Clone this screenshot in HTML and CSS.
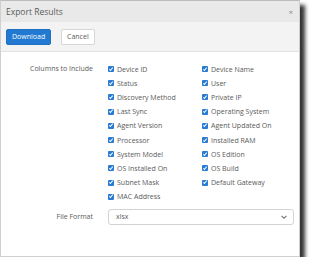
FILE: index.html
```html
<!DOCTYPE html>
<html lang="en">
<head>
    <meta charset="UTF-8" />
    <title>Export Results</title>
    <link rel="stylesheet" href="styles.css">
</head>
<body>

<div class="modal">
    <div class="modal-header">
        <span class="title">Export Results</span>
        <span class="close">&times;</span>
    </div>
    <div class="toolbar">
        <button class="btn btn-primary">Download</button>
        <button class="btn">Cancel</button>
    </div>
    <div class="modal-body">
        <div class="form-row">
            <label class="row-label">Columns to Include</label>
            <div class="columns">
                <div class="col">
                    <div class="check"><span class="box"></span>Device ID</div>
                    <div class="check"><span class="box"></span>Status</div>
                    <div class="check"><span class="box"></span>Discovery Method</div>
                    <div class="check"><span class="box"></span>Last Sync</div>
                    <div class="check"><span class="box"></span>Agent Version</div>
                    <div class="check"><span class="box"></span>Processor</div>
                    <div class="check"><span class="box"></span>System Model</div>
                    <div class="check"><span class="box"></span>OS Installed On</div>
                    <div class="check"><span class="box"></span>Subnet Mask</div>
                    <div class="check"><span class="box"></span>MAC Address</div>
                </div>
                <div class="col">
                    <div class="check"><span class="box"></span>Device Name</div>
                    <div class="check"><span class="box"></span>User</div>
                    <div class="check"><span class="box"></span>Private IP</div>
                    <div class="check"><span class="box"></span>Operating System</div>
                    <div class="check"><span class="box"></span>Agent Updated On</div>
                    <div class="check"><span class="box"></span>Installed RAM</div>
                    <div class="check"><span class="box"></span>OS Edition</div>
                    <div class="check"><span class="box"></span>OS Build</div>
                    <div class="check"><span class="box"></span>Default Gateway</div>
                </div>
            </div>
        </div>
        <div class="form-row format-row">
            <label class="row-label">File Format</label>
            <div class="select">
                <span>xlsx</span>
                <svg width="6" height="4" viewBox="0 0 6 4"><path d="M0.5 0.8 L3 3.2 L5.5 0.8" fill="none" stroke="#777" stroke-width="1.1"/></svg>
            </div>
        </div>
    </div>
</div>

</body>
</html>
```

FILE: styles.css
```css
body { margin: 0; background: #fff; font-family: "Open Sans", Arial, sans-serif; color: #5a5a5a; }
.modal { width: 298px; height: 255px; border: 1px solid #cfcfcf; border-top-color: #bdbdbd; background: #fff; box-shadow: 5px 5px 4px rgba(0,0,0,0.8); }
.modal-header { height: 21px; background: #e9e9e9; display: flex; align-items: center; justify-content: space-between; padding: 0 6px 0 5px; }
.title { font-size: 8.5px; color: #5a5a5a; }
.close { font-size: 8px; color: #888; }
.toolbar { height: 29px; background: #f3f3f3; border-bottom: 1px solid #e2e2e2; display: flex; align-items: center; gap: 10px; padding: 0 5px; }
.btn { height: 16px; padding: 0 5px; font-family: inherit; font-size: 7px; color: #5a5a5a; background: #fff; border: 1px solid #d6d6d6; border-radius: 2px; }
.btn-primary { width: 45px; background: #2279d2; border-color: #1f6fc2; color: #fff; }
.modal-body { padding-top: 10px; }
.form-row { display: flex; }
.row-label { width: 92px; text-align: right; font-size: 7px; color: #5a5a5a; line-height: 14.2px; margin-right: 15px; }
.columns { display: flex; }
.col { width: 94px; }
.check { display: flex; align-items: center; height: 14.2px; font-size: 7px; color: #5a5a5a; white-space: nowrap; }
.box { width: 6px; height: 6px; background: #2a7bd3; border-radius: 1px; margin-right: 3px; position: relative; flex: none; }
.box::after { content: ""; position: absolute; left: 1.9px; top: 0.6px; width: 1.4px; height: 3px; border: solid #fff; border-width: 0 1px 1px 0; transform: rotate(40deg); }
.format-row { margin-top: 5px; align-items: center; }
.format-row .row-label { line-height: 16px; }
.select { width: 186px; height: 16px; box-sizing: border-box; border: 1px solid #d3d3d3; border-radius: 3px; display: flex; align-items: center; justify-content: space-between; padding: 0 6px 0 7px; font-size: 7px; color: #5a5a5a; }
```
